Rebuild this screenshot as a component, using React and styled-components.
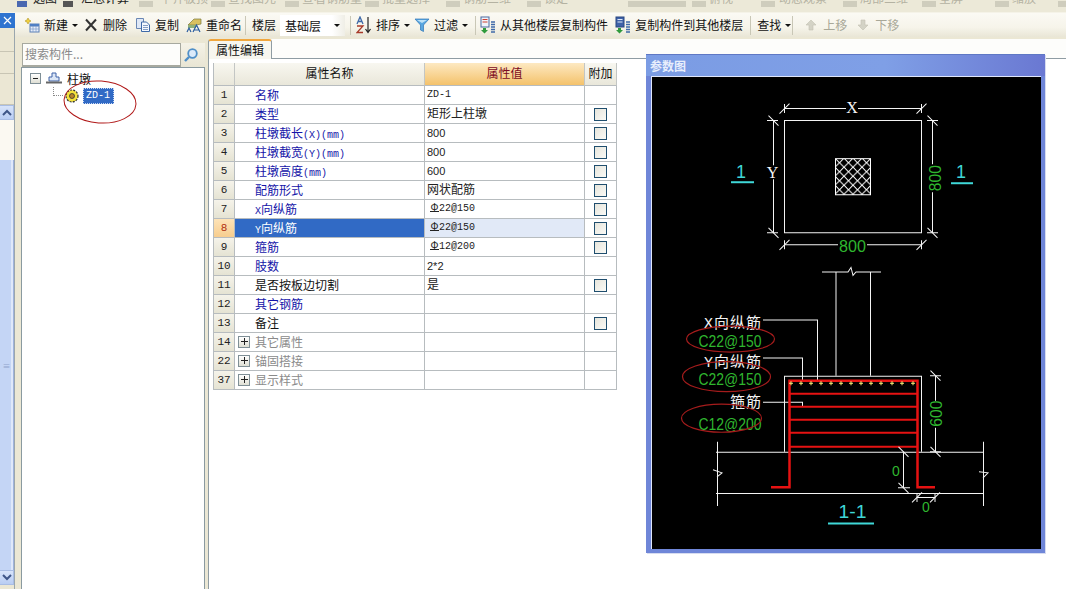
import React from "react";
import styled, { createGlobalStyle } from "styled-components";

const CJK = `"Noto Sans CJK SC", "Liberation Sans", sans-serif`;

const Global = createGlobalStyle`
  html, body { margin: 0; padding: 0; background: #fff; overflow: hidden; }
  body { font-family: ${CJK}; font-size: 12px; color: #111; }
  * { box-sizing: border-box; }
`;

const Page = styled.div`
  position: relative;
  width: 1066px;
  height: 589px;
  overflow: hidden;
  display: flex;
  flex-direction: column;
`;

/* clipped menu row at the very top */
const TopBar = styled.div`
  height: 13px;
  background: #ece9d8;
  display: flex;
  align-items: flex-end;
  overflow: hidden;
  flex: none;
  border-bottom: 1px solid #f5f3e8;
  padding-bottom: 5px;
`;
const TopLabel = styled.span`
  flex: none;
  width: ${(p) => p.$w}px;
  margin-left: ${(p) => p.$ml}px;
  height: 18px;
  line-height: 18px;
  white-space: nowrap;
  font-size: 12px;
  color: ${(p) => (p.$on ? "#222" : "#b4b2a2")};
`;
const TopIcon = styled.span`
  flex: none;
  width: ${(p) => p.$w || 14}px;
  height: 6px;
  margin-left: ${(p) => p.$ml}px;
  background: ${(p) => p.$c || "#cfcdbd"};
`;

const Work = styled.div`
  flex: 1;
  display: flex;
  min-height: 0;
`;
const Content = styled.div`
  flex: 1;
  min-width: 0;
  display: flex;
  flex-direction: column;
`;

const Toolbar = styled.div`
  height: 24px;
  flex: none;
  display: flex;
  align-items: center;
  padding-left: 9px;
  background: linear-gradient(#fbfaf4, #f6f4ea 60%, #e9e6d6);
`;
const ToolItem = styled.div`
  display: flex;
  align-items: center;
  gap: 4px;
  flex: none;
  margin-left: ${(p) => p.$ml || 0}px;
  color: ${(p) => (p.$off ? "#a9a898" : "#111")};
  white-space: nowrap;
  line-height: 16px;
`;
const Caret = styled.span`
  width: 0;
  height: 0;
  border-left: 3px solid transparent;
  border-right: 3px solid transparent;
  border-top: 3px solid #111;
`;
const ToolSep = styled.span`
  width: 1px;
  height: 19px;
  background: #c9c7b6;
  flex: none;
  margin-left: ${(p) => p.$ml}px;
`;
const FloorSelect = styled.div`
  width: 65px;
  height: 21px;
  margin-left: 4px;
  flex: none;
  display: flex;
  align-items: center;
  justify-content: space-between;
  padding: 0 5px;
  background: linear-gradient(90deg, #fff 80%, #efeee6);
`;

const Body = styled.div`
  flex: 1;
  display: flex;
  min-height: 0;
  background: #ebe7d4;
`;

/* left strip with scroll bar */
const Strip = styled.div`
  width: 15px;
  flex: none;
  display: flex;
  flex-direction: column;
  background: #ebe7d4;
  border-right: 1px solid #9aa6ad;
`;
const CloseBox = styled.div`
  height: 15px;
  background: #2f74d0;
  display: flex;
  align-items: center;
  justify-content: center;
  margin-right: -1px;
  svg { display: block; }
`;
const StripTab = styled.div`
  height: ${(p) => p.$h}px;
  border-bottom: 1px solid #c8c5b4;
  flex: none;
`;
const ScrollBtn = styled.div`
  height: 15px;
  flex: none;
  background: linear-gradient(#d8e4fa, #b9cdf3);
  border: 1px solid #a9bde4;
  border-left: none;
  display: flex;
  align-items: center;
  justify-content: center;
`;
const ScrollTrack = styled.div`
  height: 40px;
  flex: none;
  background: #fbf9f2;
`;
const ScrollThumb = styled.div`
  flex: 1;
  background: #c4d5f5;
  border-right: 1px solid #9fb3dc;
  box-shadow: inset -2px 0 0 #dfe8fa;
  display: flex;
  align-items: center;
  justify-content: center;
  color: #8fa4cc;
  font-size: 8px;
`;
const StripEnd = styled.div`
  height: 4px;
  flex: none;
`;

/* tree panel */
const TreePanel = styled.div`
  width: 184px;
  margin-left: 6px;
  margin-top: 6px;
  flex: none;
  display: flex;
  flex-direction: column;
  position: relative;
`;
const SearchRow = styled.div`
  height: 24px;
  flex: none;
  display: flex;
`;
const SearchInput = styled.div`
  width: 159px;
  height: 24px;
  margin-left: 1px;
  border: 1px solid #a7a99f;
  border-bottom: 2px solid #a7a99f;
  background: #fdfdfb;
  color: #8a8a8a;
  line-height: 20px;
  padding-left: 2px;
  font-size: 12px;
`;
const SearchBtn = styled.div`
  width: 24px;
  height: 24px;
  background: linear-gradient(#f4f2e7, #e8e5d4);
  display: flex;
  align-items: center;
  justify-content: center;
  padding-right: 4px;
`;
const TreeArea = styled.div`
  flex: 1;
  background: #fff;
  border: 1px solid #8a9aa0;
  border-bottom: none;
  padding: 1px 0 0 8px;
`;
const TreeRow = styled.div`
  display: flex;
  align-items: center;
  height: ${(p) => p.$h}px;
  gap: ${(p) => p.$gap}px;
  padding-left: ${(p) => p.$pl || 0}px;
`;
const ToggleBox = styled.span`
  width: 11px;
  height: 11px;
  border: 1px solid #7f8f96;
  background: linear-gradient(#fff, #dfdfd4);
  display: flex;
  align-items: center;
  justify-content: center;
  flex: none;
  &::before {
    content: "";
    width: 5px;
    height: 1px;
    background: #222;
  }
`;
const Dotted = styled.span`
  width: 10px;
  height: 9px;
  margin-top: -9px;
  border-left: 1px dotted #888;
  border-bottom: 1px dotted #888;
  flex: none;
`;
const SelectedNode = styled.span`
  height: 16px;
  width: 31px;
  margin-left: 2px;
  padding: 0 2px;
  background: #316ac5;
  border: 1px dotted #c9d8f2;
  color: #fff;
  font: 10px/14px "Liberation Mono", monospace;
  white-space: nowrap;
`;
const TreeCircle = styled.svg`
  position: absolute;
  left: 42px;
  top: 37px;
  width: 76px;
  height: 46px;
`;

/* main panel */
const Main = styled.div`
  flex: 1;
  margin-left: 4px;
  margin-top: 2px;
  min-width: 0;
  display: flex;
  flex-direction: column;
  background: #fff;
`;
const TabRow = styled.div`
  height: 20px;
  flex: none;
  display: flex;
  background: #fdfdfb;
  border-bottom: 1px solid #8f9ca3;
`;
const Tab = styled.div`
  width: 64px;
  height: 20px;
  line-height: 18px;
  text-align: center;
  border: 1px solid #8f9ca3;
  border-top: 2px solid #f0a63e;
  border-bottom: none;
  border-radius: 3px 3px 0 0;
  background: #f7f6ef;
  margin-left: -1px;
  position: relative;
`;
const Sheet = styled.div`
  flex: 1;
  background: #fff;
  border-left: 1px solid #8f9ca3;
  padding: 4px 0 0 4px;
  margin-left: -1px;
`;
const Grid = styled.div`
  display: grid;
  grid-template-columns: 21px 190px 160px 32px;
  grid-template-rows: 23px;
  grid-auto-rows: 19px;
  width: 404px;
  border-left: 1px solid #b7bcbf;
`;
const HeadCell = styled.div`
  height: 23px;
  background: ${(p) =>
    p.$active
      ? "linear-gradient(#fde9c2, #f4c26b)"
      : "linear-gradient(#f8f7f0, #e9e7da)"};
  color: ${(p) => (p.$active ? "#7c0a22" : "#111")};
  text-align: center;
  line-height: 20px;
  border-right: 1px solid #c3c6c4;
  border-bottom: 1px solid #b7bcbf;
`;
const NumCell = styled.div`
  background: ${(p) =>
    p.$sel ? "linear-gradient(#fde3b8, #f7cd8e)" : "linear-gradient(#f5f3ea, #e5e3d3)"};
  color: ${(p) => (p.$sel ? "#b03010" : "#222")};
  border-right: 1px solid #b7bcbf;
  border-bottom: 1px solid #b7bcbf;
  font: 11px/18px "Liberation Mono", monospace;
  text-align: center;
`;
const NameCell = styled.div`
  display: flex;
  align-items: center;
  height: 19px;
  padding-left: ${(p) => (p.$group ? "3px" : "20px")};
  padding-bottom: 1px;
  gap: 5px;
  white-space: nowrap;
  background: ${(p) => (p.$sel ? "#316ac5" : "#fff")};
  color: ${(p) => (p.$sel ? "#fff" : p.$tone === "blue" ? "#1414a8" : p.$tone === "grey" ? "#8a8a8a" : "#111")};
  border-right: 1px solid #b7bcbf;
  border-bottom: 1px solid #b7bcbf;
`;
const Latin = styled.span`
  font: 10px "Liberation Mono", monospace;
`;
const ValueCell = styled.div`
  height: 19px;
  line-height: 18px;
  padding-left: ${(p) => (p.$rebar ? "5px" : "2px")};
  white-space: nowrap;
  background: ${(p) => (p.$sel ? "#e1e9f7" : "#fff")};
  font-family: ${(p) => (p.$mono ? `"Liberation Mono", monospace` : `"Liberation Sans", "Noto Sans CJK SC", sans-serif`)};
  font-size: ${(p) => (p.$mono ? "10px" : p.$ascii ? "11px" : "12px")};
  border-right: 1px solid #b7bcbf;
  border-bottom: 1px solid #b7bcbf;
  color: #222;
`;
const RebarMark = styled.span`
  display: inline-block;
  width: 9px;
  height: 9px;
  line-height: 9px;
  font-family: "Liberation Sans", sans-serif;
  font-size: 10px;
  text-align: center;
  border-bottom: 1px solid #222;
`;
const ExtraCell = styled.div`
  height: 19px;
  display: flex;
  align-items: center;
  justify-content: center;
  border-right: 1px solid #b7bcbf;
  border-bottom: 1px solid #b7bcbf;
  background: #fff;
`;
const Check = styled.span`
  width: 13px;
  height: 13px;
  border: 1px solid #1f4e6e;
  background: linear-gradient(135deg, #e6e5dc, #fafaf6);
`;
const PlusBox = styled(ToggleBox)`
  position: relative;
  width: 12px;
  height: 12px;
  &::after {
    content: "";
    position: absolute;
    width: 1px;
    height: 7px;
    background: #222;
  }
  &::before { width: 7px; }
`;

/* floating parameter window */
const ParamWindow = styled.div`
  position: absolute;
  left: 646px;
  top: 54px;
  width: 399px;
  height: 499px;
  background: #6f86d8;
  display: flex;
  flex-direction: column;
  padding: 0 4px 4px 5px;
  box-shadow: 1px 1px 0 #d7dcf0;
`;
const ParamTitle = styled.div`
  height: 22px;
  flex: none;
  margin: 0 -4px 0 -5px;
  padding-left: 4px;
  background: linear-gradient(90deg, #7b9ce4, #7f9fe6 60%, #6a78d2);
  border-top: 1px solid #5f78c4;
  color: #e8eefc;
  font-weight: 700;
  line-height: 22px;
  font-size: 12px;
`;
const ParamCanvas = styled.svg`
  flex: 1;
  display: block;
  width: 390px;
  height: 473px;
  background: #000;
  border: 1px solid #dfe6fa;
  border-bottom: none;
  border-right: none;
`;

const ROWS = [
  { n: 1, name: "名称", tone: "blue", value: "ZD-1", mono: true },
  { n: 2, name: "类型", tone: "blue", value: "矩形上柱墩", check: true },
  { n: 3, name: "柱墩截长", unit: "(X)(mm)", tone: "blue", value: "800", check: true },
  { n: 4, name: "柱墩截宽", unit: "(Y)(mm)", tone: "blue", value: "800", check: true },
  { n: 5, name: "柱墩高度", unit: "(mm)", tone: "blue", value: "600", check: true },
  { n: 6, name: "配筋形式", tone: "blue", value: "网状配筋", check: true },
  { n: 7, lead: "X", name: "向纵筋", tone: "blue", rebar: "22@150", check: true },
  { n: 8, lead: "Y", name: "向纵筋", tone: "blue", rebar: "22@150", check: true, sel: true },
  { n: 9, name: "箍筋", tone: "blue", rebar: "12@200", check: true },
  { n: 10, name: "肢数", tone: "blue", value: "2*2" },
  { n: 11, name: "是否按板边切割", value: "是", check: true },
  { n: 12, name: "其它钢筋", tone: "blue", value: "" },
  { n: 13, name: "备注", value: "", check: true },
  { n: 14, name: "其它属性", tone: "grey", group: true, value: "" },
  { n: 22, name: "锚固搭接", tone: "grey", group: true, value: "" },
  { n: 37, name: "显示样式", tone: "grey", group: true, value: "" },
];

const NewIcon = () => (
  <svg width="16" height="16" viewBox="0 0 16 16">
    <rect x="6" y="7" width="9" height="8" fill="#e8effa" stroke="#5b7fb5" />
    <path d="M6 9.5h9M6 12h9M9 7v8M12 7v8" stroke="#7d9bc8" strokeWidth=".7" />
    <rect x="6" y="7" width="9" height="2" fill="#4f7fc4" />
    <path d="M4 1l1 2 2 1-2 1-1 2-1-2-2-1 2-1z" fill="#f4d23c" stroke="#b09420" strokeWidth=".6" />
  </svg>
);
const DeleteIcon = () => (
  <svg width="16" height="16" viewBox="0 0 16 16">
    <path d="M3 2.5l10 11M13 2.5L3 13.5" stroke="#333" strokeWidth="2" />
  </svg>
);
const CopyIcon = () => (
  <svg width="16" height="16" viewBox="0 0 16 16">
    <path d="M1.5 1.5h7v10h-7z" fill="#dfe8f6" stroke="#6a87b4" />
    <path d="M6.5 5h5l3 3v6.5h-8z" fill="#f5f8fd" stroke="#3f6aa8" />
    <path d="M8 8.5h5M8 10.5h5M8 12.5h5" stroke="#6a87b4" strokeWidth=".8" />
  </svg>
);
const RenameIcon = () => (
  <svg width="16" height="16" viewBox="0 0 16 16">
    <path d="M2 8l6-6h7v5l-5 1z" fill="#d9c060" stroke="#7a7a40" strokeWidth=".7" />
    <path d="M2 8h8v3H2z" fill="#8fb07a" />
    <path d="M1 15l2-4 2 4M7 15l3.500-7 3.500 7M8.500 13h4" stroke="#2b5d9f" strokeWidth="1.200" fill="none" />
  </svg>
);
const SortIcon = () => (
  <svg width="16" height="18" viewBox="0 0 16 18">
    <path d="M1 8l3-7 3 7M2 5.500h4" stroke="#3f6aa8" strokeWidth="1.300" fill="none" />
    <path d="M1 10h6l-6 6.500h6" stroke="#a83a2a" strokeWidth="1.300" fill="none" />
    <path d="M12 1v15M9.500 13l2.500 3.500 2.500-3.500" stroke="#222" strokeWidth="1.200" fill="none" />
  </svg>
);
const FilterIcon = () => (
  <svg width="16" height="16" viewBox="0 0 16 16">
    <path d="M1 2h14L9.500 8v6.500l-3-1.500V8z" fill="#5aa7e0" stroke="#2f76b8" strokeWidth=".7" />
    <path d="M3 3h10L8 6z" fill="#bfe2f7" />
  </svg>
);
const FromFloorIcon = () => (
  <svg width="16" height="18" viewBox="0 0 16 18">
    <rect x="1" y="1" width="8" height="10" fill="#f0f4fb" stroke="#4a6aa0" />
    <path d="M2.500 3.500h5M2.500 6h5" stroke="#d04030" />
    <path d="M3 12h3v2h2l-3.500 3.500L1 14h2z" fill="#2f9a3c" />
    <path d="M11 6h4M11 8.500h4M11 11h4M11 13.500h4M11 16h4" stroke="#3f6aa8" strokeWidth="1.300" />
  </svg>
);
const ToFloorIcon = () => (
  <svg width="16" height="18" viewBox="0 0 16 18">
    <rect x="1" y="1" width="8" height="10" fill="#3f62a8" stroke="#2b4780" />
    <path d="M2.500 3.500h5M2.500 6h5" stroke="#dfe8f6" />
    <path d="M3 12h3v2h2l-3.500 3.500L1 14h2z" fill="#2f9a3c" />
    <path d="M11 6h4M11 8.500h4M11 11h4M11 13.500h4M11 16h4" stroke="#3f6aa8" strokeWidth="1.300" />
  </svg>
);
const ArrowIcon = ({ down }) => (
  <svg width="16" height="16" viewBox="0 0 16 16">
    <path
      d={down ? "M6 3h4v5h3l-5 5-5-5h3z" : "M8 3l5 5h-3v5H6V8H3z"}
      fill="#d4d3c6"
      stroke="#c2c1b2"
      strokeWidth=".6"
    />
  </svg>
);
const SearchGlass = () => (
  <svg width="16" height="16" viewBox="0 0 16 16">
    <circle cx="9.500" cy="6.500" r="4.300" fill="#dbeafa" stroke="#4f8fc8" strokeWidth="1.800" />
    <path d="M6 10l-4 4" stroke="#4f8fc8" strokeWidth="2.400" />
  </svg>
);
const PierIcon = () => (
  <svg width="16" height="13" viewBox="0 0 16 13">
    <path d="M6 1h4v4h3v4H3V5h3z" fill="#dbe6f6" stroke="#3f62a8" />
    <path d="M0 10.500h16" stroke="#666" strokeWidth="2" />
  </svg>
);
const GearIcon = () => (
  <svg width="14" height="14" viewBox="0 0 14 14">
    <circle cx="7" cy="7" r="6" fill="#f4e23c" stroke="#333" strokeWidth="1.200" strokeDasharray="2 1.200" />
    <circle cx="7" cy="7" r="2.500" fill="#b8842a" stroke="#333" strokeWidth=".8" />
  </svg>
);

const WHITE = "#f4f4f4";
const GREEN = "#2fb62f";
const CYAN = "#3fd7d7";
const RED = "#e61212";

const DrawLine = styled.path`
  fill: none;
  stroke: ${(p) => p.$c || WHITE};
  stroke-width: ${(p) => p.$w || 1}px;
`;
const CadText = styled.text`
  font-family: "Liberation Sans", sans-serif;
  font-size: ${(p) => p.$s || 15}px;
  fill: ${(p) => p.$c || WHITE};
  text-anchor: middle;
`;
const AxisLetter = styled.text`
  font-family: "Liberation Serif", serif;
  font-size: 16px;
  fill: ${WHITE};
  text-anchor: middle;
`;
const CadLabel = styled.text`
  font-family: "Liberation Mono", "Noto Sans CJK SC", sans-serif;
  font-size: 15px;
  fill: ${WHITE};
  text-anchor: end;
  letter-spacing: 1px;
`;
const Ring = styled.ellipse`
  fill: none;
  stroke: #a51c1c;
  stroke-width: 1.200px;
`;

const tick = (x, y) => `M${x - 5} ${y + 5}L${x + 5} ${y - 5}`;
const tickB = (x, y) => `M${x - 5} ${y - 5}L${x + 5} ${y + 5}`;

const DOTS = [791, 801, 811, 821, 831, 841, 851, 861, 871, 881, 892, 902, 913];
const TIES = [394, 407, 420, 433, 447];

const Squeezed = ({ len, ...rest }) => (
  <CadText textLength={len} lengthAdjust="spacingAndGlyphs" {...rest} />
);

const Drawing = () => (
  <ParamCanvas viewBox="652 78 389 471" preserveAspectRatio="none">
    <defs>
      <pattern id="hatch" width="9" height="9" patternUnits="userSpaceOnUse" x="835" y="159">
        <path d="M0 0L9 9M9 0L0 9" stroke="#fff" strokeWidth="1" />
      </pattern>
    </defs>

    {/* plan view */}
    <DrawLine d="M784.500 121.500H921.500V233.500H784.500Z" />
    <rect x="835.500" y="159.500" width="35" height="36" fill="url(#hatch)" stroke="#fff" />
    <DrawLine d="M784.500 109.500H846M858 109.500H921.500" />
    <DrawLine d={`${tick(784.5, 109.5)}${tick(921.5, 109.5)}M784.500 105V114M921.500 105V114`} />
    <DrawLine d="M773.500 121.500V166M773.500 180V233.500M767 121.500H778M767 233.500H778" />
    <DrawLine d={`${tickB(773.5, 121.5)}${tickB(773.5, 233.5)}`} />
    <DrawLine d="M932.500 121.500V165M932.500 193V233.500M927 121.500H938M927 233.500H938" />
    <DrawLine d={`${tickB(932.5, 121.5)}${tickB(932.5, 233.5)}`} />
    <DrawLine d="M784.500 245.500H838M867 245.500H921.500" />
    <DrawLine d={`${tick(784.5, 245.5)}${tick(921.5, 245.5)}M784.500 241V250M921.500 241V250`} />
    <AxisLetter x="852" y="114">X</AxisLetter>
    <AxisLetter x="772.500" y="179">Y</AxisLetter>
    <Squeezed x="852.500" y="253" $c={GREEN} $s={16} len={27}>800</Squeezed>
    <Squeezed transform="translate(941 179) rotate(-90)" $c={GREEN} $s={16} len={26}>800</Squeezed>
    <CadText x="741" y="179" $c={CYAN} $s={18}>1</CadText>
    <DrawLine d="M731 183H754" $c={CYAN} $w={2} />
    <CadText x="961" y="179" $c={CYAN} $s={18}>1</CadText>
    <DrawLine d="M951 184H973" $c={CYAN} $w={2} />

    {/* section */}
    <DrawLine d="M822 272.500H848L851 268L853 276L856 272.500H881" />
    <DrawLine d="M836 272.500V376M870.500 272.500V376" />
    <DrawLine d="M784.500 452V376.500H921.500V452" />
    <DrawLine d="M716 452.500H983M716 493.500H983M717.500 442V506M983.500 442V506" />
    <DrawLine d="M713 470L722 473L717 477M979 472L988 473L983 478" />
    <DrawLine d="M763 320.500H817.500V381M763 358.500H802.500V381M763 402.500H802.500V407" />

    {TIES.map((y) => (
      <DrawLine key={y} d={`M789 ${y}H917`} $c={RED} $w={2} />
    ))}
    <DrawLine d="M771 487.500H789.500V381H917.500V487.500H935" $c={RED} $w={2.5} />
    {DOTS.map((x) => (
      <path key={x} d={`M${x - 2} 383.500H${x + 2}M${x} 381.500V385.500`} stroke="#fff07a" strokeWidth="1" />
    ))}

    <DrawLine d="M935.500 376V401M935.500 428V452M930 376H941M930 452H941" />
    <DrawLine d={`${tickB(935.5, 376)}${tickB(935.5, 452)}`} />
    <Squeezed transform="translate(941.500 414) rotate(-90)" $c={GREEN} $s={16} len={26}>600</Squeezed>
    <DrawLine d="M903.500 452V488M898 488H910" />
    <DrawLine d={`${tickB(903.5, 452)}${tickB(903.5, 488)}`} />
    <CadText x="896" y="476" $c={GREEN} $s={14}>0</CadText>
    <DrawLine d="M917 497.500H935M917 493V502M935 493V502" />
    <DrawLine d={`${tick(917, 497.5)}${tick(935, 497.5)}`} />
    <CadText x="926" y="512" $c={GREEN} $s={14}>0</CadText>
    <Squeezed x="852.500" y="518" $c={CYAN} $s={18} len={28}>1-1</Squeezed>
    <DrawLine d="M828 523.500H874" $c={CYAN} $w={2} />

    {/* rebar labels */}
    <CadLabel x="762" y="328">X向纵筋</CadLabel>
    <CadLabel x="762" y="367">Y向纵筋</CadLabel>
    <CadLabel x="762" y="407">箍筋</CadLabel>
    <Squeezed x="730" y="347" $c={GREEN} $s={16} len={63}>C22@150</Squeezed>
    <Squeezed x="730" y="385" $c={GREEN} $s={16} len={63}>C22@150</Squeezed>
    <Squeezed x="730" y="430" $c={GREEN} $s={16} len={63}>C12@200</Squeezed>
    <Ring cx="730.500" cy="339.500" rx="44" ry="13" />
    <Ring cx="726.500" cy="377" rx="44" ry="15" />
    <Ring cx="721.500" cy="418.500" rx="40" ry="14" />
  </ParamCanvas>
);

export default function App() {
  return (
    <Page>
      <Global />
      <TopBar>
        <TopIcon $ml={17} $w={10} $c="#4a68b0" />
        <TopLabel $ml={6} $w={30} $on>选图</TopLabel>
        <TopIcon $ml={0} $w={10} $c="#555" />
        <TopLabel $ml={8} $w={52} $on>汇总计算</TopLabel>
        <TopIcon $ml={6} />
        <TopLabel $ml={7} $w={50}>平齐板顶</TopLabel>
        <TopIcon $ml={1} />
        <TopLabel $ml={3} $w={56}>查找图元</TopLabel>
        <TopIcon $ml={1} />
        <TopLabel $ml={3} $w={60}>查看钢筋量</TopLabel>
        <TopIcon $ml={3} />
        <TopLabel $ml={3} $w={60}>批量选择</TopLabel>
        <TopIcon $ml={4} />
        <TopLabel $ml={3} $w={60}>钢筋三维</TopLabel>
        <TopIcon $ml={4} />
        <TopLabel $ml={3} $w={80}>锁定</TopLabel>
        <TopIcon $ml={4} $w={58} />
        <TopIcon $ml={6} />
        <TopLabel $ml={3} $w={50}>俯视</TopLabel>
        <TopIcon $ml={2} />
        <TopLabel $ml={4} $w={62}>动态观察</TopLabel>
        <TopIcon $ml={2} />
        <TopLabel $ml={3} $w={58}>局部三维</TopLabel>
        <TopIcon $ml={4} />
        <TopLabel $ml={3} $w={50}>全屏</TopLabel>
        <TopIcon $ml={6} />
        <TopLabel $ml={3} $w={44}>缩放</TopLabel>
        <TopIcon $ml={2} />
        <TopLabel $ml={3} $w={30}>平移</TopLabel>
      </TopBar>

      <Work>
        <Strip>
          <CloseBox>
            <svg width="9" height="9" viewBox="0 0 9 9"><path d="M1 1l7 7M8 1L1 8" stroke="#fff" strokeWidth="1.200" /></svg>
          </CloseBox>
          <StripTab $h={24} />
          <StripTab $h={22} />
          <StripTab $h={31} />
          <ScrollBtn>
            <svg width="10" height="7" viewBox="0 0 10 7"><path d="M1 6l4-4 4 4" stroke="#3f5688" strokeWidth="2" fill="none" /></svg>
          </ScrollBtn>
          <ScrollTrack />
          <ScrollThumb>≡</ScrollThumb>
          <ScrollBtn>
            <svg width="10" height="7" viewBox="0 0 10 7"><path d="M1 1l4 4 4-4" stroke="#3f5688" strokeWidth="2" fill="none" /></svg>
          </ScrollBtn>
          <StripEnd />
        </Strip>

        <Content>
          <Toolbar>
            <ToolItem><NewIcon />新建<Caret /></ToolItem>
            <ToolItem $ml={5}><DeleteIcon />删除</ToolItem>
            <ToolItem $ml={8}><CopyIcon />复制</ToolItem>
            <ToolItem $ml={7}><RenameIcon />重命名</ToolItem>
            <ToolSep $ml={3} />
            <ToolItem $ml={6}>楼层</ToolItem>
            <FloorSelect>基础层<Caret /></FloorSelect>
            <ToolSep $ml={5} />
            <ToolItem $ml={5}><SortIcon />排序<Caret /></ToolItem>
            <ToolItem $ml={4}><FilterIcon />过滤<Caret /></ToolItem>
            <ToolSep $ml={7} />
            <ToolItem $ml={4}><FromFloorIcon />从其他楼层复制构件</ToolItem>
            <ToolItem $ml={7}><ToFloorIcon />复制构件到其他楼层</ToolItem>
            <ToolSep $ml={7} />
            <ToolItem $ml={6}>查找<Caret /></ToolItem>
            <ToolSep $ml={1} />
            <ToolItem $ml={10} $off><ArrowIcon />上移</ToolItem>
            <ToolItem $ml={8} $off><ArrowIcon down />下移</ToolItem>
          </Toolbar>

          <Body>
            <TreePanel>
              <SearchRow>
                <SearchInput>搜索构件...</SearchInput>
                <SearchBtn><SearchGlass /></SearchBtn>
              </SearchRow>
              <TreeArea>
                <TreeRow $h={18} $gap={5}>
                  <ToggleBox />
                  <PierIcon />
                  <span>柱墩</span>
                </TreeRow>
                <TreeRow $h={17} $gap={2} $pl={23}>
                  <Dotted />
                  <GearIcon />
                  <SelectedNode>ZD-1</SelectedNode>
                </TreeRow>
              </TreeArea>
              <TreeCircle viewBox="0 0 76 46">
                <ellipse cx="37" cy="22" rx="36" ry="21" fill="none" stroke="#b01818" strokeWidth="1" transform="rotate(4 37 22)" />
              </TreeCircle>
            </TreePanel>

            <Main>
              <TabRow><Tab>属性编辑</Tab></TabRow>
              <Sheet>
                <Grid>
                  <HeadCell />
                  <HeadCell>属性名称</HeadCell>
                  <HeadCell $active>属性值</HeadCell>
                  <HeadCell>附加</HeadCell>
                  {ROWS.map((r) => (
                    <React.Fragment key={r.n}>
                      <NumCell $sel={r.sel}>{r.n}</NumCell>
                      <NameCell $sel={r.sel} $tone={r.tone} $group={r.group}>
                        {r.group && <PlusBox />}
                        <span>
                          {r.lead && <Latin>{r.lead}</Latin>}
                          {r.name}
                          {r.unit && <Latin>{r.unit}</Latin>}
                        </span>
                      </NameCell>
                      <ValueCell
                        $sel={r.sel}
                        $mono={r.mono || !!r.rebar}
                        $rebar={!!r.rebar}
                        $ascii={/^[\x20-\x7e]+$/.test(r.value || "")}
                      >
                        {r.rebar ? (
                          <>
                            <RebarMark>Φ</RebarMark>
                            {r.rebar}
                          </>
                        ) : (
                          r.value
                        )}
                      </ValueCell>
                      <ExtraCell>{r.check && <Check />}</ExtraCell>
                    </React.Fragment>
                  ))}
                </Grid>
              </Sheet>
            </Main>
          </Body>
        </Content>
      </Work>

      <ParamWindow>
        <ParamTitle>参数图</ParamTitle>
        <Drawing />
      </ParamWindow>
    </Page>
  );
}
